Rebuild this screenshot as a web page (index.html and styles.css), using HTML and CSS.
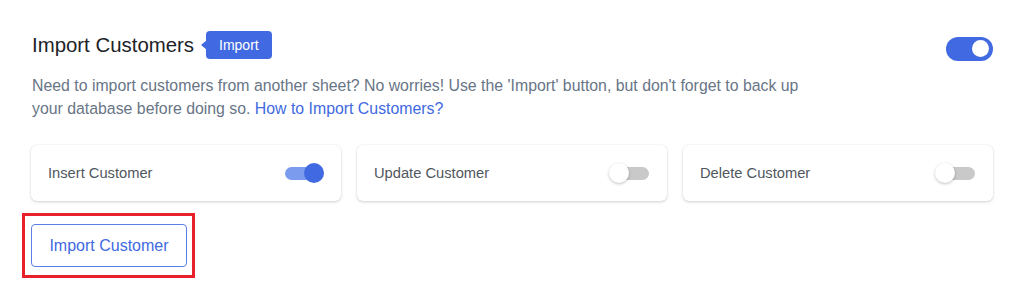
FILE: index.html
```html
<!DOCTYPE html>
<html lang="en">
<head>
  <meta charset="UTF-8">
  <title>Import Customers</title>
  <link rel="stylesheet" href="styles.css">
</head>
<body>
  <div class="panel">
    <div class="head">
      <h2 class="title">Import Customers</h2>
      <span class="badge">Import</span>
      <span class="switch on"><span class="knob"></span></span>
    </div>

    <p class="desc">
      Need to import customers from another sheet? No worries! Use the 'Import' button, but don't forget to back up<br>
      your database before doing so. <a href="#">How to Import Customers?</a>
    </p>

    <div class="options">
      <div class="card">
        <span>Insert Customer</span>
        <span class="mini on"><span class="dot"></span></span>
      </div>
      <div class="card">
        <span>Update Customer</span>
        <span class="mini"><span class="dot"></span></span>
      </div>
      <div class="card">
        <span>Delete Customer</span>
        <span class="mini"><span class="dot"></span></span>
      </div>
    </div>

    <div class="highlight">
      <button class="btn">Import Customer</button>
    </div>
  </div>
</body>
</html>
```

FILE: styles.css
```css
body {
    margin: 0;
    padding: 0;
    background: #fff;
    font-family: "Liberation Sans", Arial, sans-serif;
}

.panel {
    padding: 30px 31px 0 31px;
}

.head {
    display: flex;
    align-items: center;
    height: 30px;
}

.title {
    margin: 0 0 0 1px;
    font-size: 20.4px;
    font-weight: normal;
    color: #1d2327;
}

.badge {
    position: relative;
    margin-left: 12px;
    background: #4169e1;
    color: #fff;
    font-size: 14px;
    height: 28px;
    line-height: 28px;
    padding: 0 13px;
    border-radius: 4px;
}

.badge:before {
    content: "";
    position: absolute;
    left: -5px;
    top: 9px;
    border-top: 5px solid transparent;
    border-bottom: 5px solid transparent;
    border-right: 6px solid #4169e1;
}

.switch {
    margin-left: auto;
    margin-top: 7px;
    width: 47px;
    height: 24px;
    border-radius: 12px;
    background: #4169e1;
    display: flex;
    align-items: center;
    justify-content: flex-end;
    padding: 0 4px;
    box-sizing: border-box;
}

.switch .knob {
    width: 17px;
    height: 17px;
    border-radius: 50%;
    background: #fff;
}

.desc {
    margin: 14px 0 0 1px;
    font-size: 15.85px;
    line-height: 23px;
    color: #687586;
}

.desc a {
    color: #4169e1;
    text-decoration: none;
}

.options {
    display: flex;
    gap: 16px;
    margin-top: 25px;
}

.card {
    flex: 1;
    height: 56px;
    display: flex;
    align-items: center;
    justify-content: space-between;
    padding: 0 18px 0 17px;
    border-radius: 6px;
    background: #fff;
    box-shadow: 0 1px 3px rgba(0, 0, 0, 0.18), 0 0 1px rgba(0, 0, 0, 0.08);
    font-size: 14.7px;
    color: #50575e;
}

.mini {
    position: relative;
    width: 38px;
    height: 13px;
    border-radius: 7px;
    background: #c9c9c9;
}

.mini .dot {
    position: absolute;
    top: -4px;
    left: -2px;
    width: 20px;
    height: 20px;
    border-radius: 50%;
    background: #fff;
    box-shadow: 0 1px 3px rgba(0, 0, 0, 0.25);
}

.mini.on {
    background: #7b9bee;
}

.mini.on .dot {
    left: auto;
    right: -1px;
    background: #4169e1;
    box-shadow: none;
}

.highlight {
    display: inline-block;
    margin: 12px 0 0 -9px;
    padding: 8px 5px 8px 6px;
    border: 3px solid #e8202a;
}

.btn {
    display: block;
    width: 156px;
    height: 43px;
    background: #fff;
    border: 1px solid #5b7fe6;
    border-radius: 4px;
    color: #4169e1;
    font-family: "Liberation Sans", Arial, sans-serif;
    font-size: 16px;
    cursor: pointer;
}
```
